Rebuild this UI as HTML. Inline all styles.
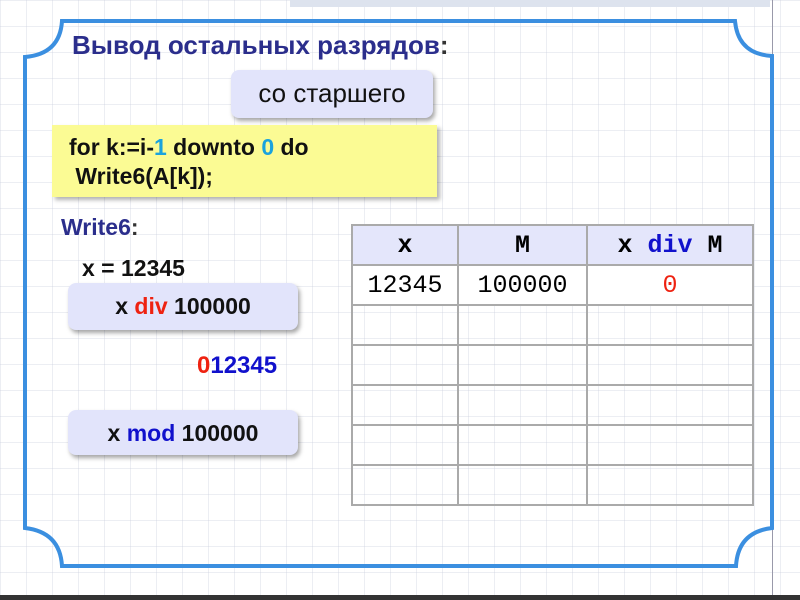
<!DOCTYPE html>
<html><head><meta charset="utf-8"><style>
body{margin:0;width:800px;height:600px;position:relative;overflow:hidden;font-family:"Liberation Sans",sans-serif;
background-color:#fff;
background-image:linear-gradient(90deg,rgba(200,205,220,.35) 1px,transparent 1px),linear-gradient(rgba(200,205,220,.35) 1px,transparent 1px);
background-size:26px 26px;}
.a{position:absolute;white-space:nowrap}
.bub{position:absolute;background:#e2e4fb;border-radius:8px;box-shadow:2px 3px 4px rgba(0,0,0,.35);font-weight:bold;font-size:23px;text-align:center}
table{border-collapse:collapse;position:absolute;left:351px;top:224px;font-family:"Liberation Mono",monospace;font-size:25px}
td{border:2px solid #aaa;height:38px;text-align:center;padding:0}
</style></head><body>
<div class="a" style="left:290px;top:0;width:480px;height:7px;background:#dde3ee"></div>
<div class="a" style="left:772px;top:0;width:1px;height:600px;background:#99a"></div>
<svg class="a" style="left:0;top:0" width="800" height="600">
<path d="M62 21 H735 Q738 54 772 56 V528 Q738 532 736 566 H62 Q60 532 25 528 V57 Q60 54 62 21 Z" fill="none" stroke="#3b8fe0" stroke-width="4"/>
</svg>
<div class="a" style="left:72px;top:30px;font-size:26px;font-weight:bold;color:#2b2e8c">Вывод остальных разрядов<span style="color:#333">:</span></div>
<div class="bub" style="left:231px;top:70px;width:202px;height:48px;line-height:46px;font-weight:normal;font-size:26px;color:#111">со старшего</div>
<div class="a" style="left:52px;top:125px;width:385px;height:72px;background:#fbfb94;box-shadow:3px 3px 4px rgba(0,0,0,.3);font-weight:bold;font-size:23px;line-height:29px;padding:8px 0 0 17px;box-sizing:border-box;color:#111">for k:=i-<span style="color:#1aa3dd">1</span> downto <span style="color:#1aa3dd">0</span> do<br>&nbsp;Write6(A[k]);</div>
<div class="a" style="left:61px;top:214px;font-size:23px;font-weight:bold;color:#2b2e8c">Write6<span style="color:#333">:</span></div>
<div class="a" style="left:82px;top:255px;font-size:23px;font-weight:bold;color:#111">x = 12345</div>
<div class="bub" style="left:68px;top:283px;width:230px;height:47px;line-height:46px;color:#111">x <span style="color:#e21">div</span> 100000</div>
<div class="a" style="left:197px;top:352px;font-size:24px;font-weight:bold;color:#11c"><span style="color:#e21">0</span>12345</div>
<div class="bub" style="left:68px;top:410px;width:230px;height:45px;line-height:46px;color:#111">x <span style="color:#11c">mod</span> 100000</div>
<table>
<tr style="background:#e4e6fb;font-weight:bold"><td style="width:104px">x</td><td style="width:127px">M</td><td style="width:164px">x <span style="color:#11c">div</span> M</td></tr>
<tr style="background:#fff"><td>12345</td><td>100000</td><td style="color:#e21">0</td></tr>
<tr><td></td><td></td><td></td></tr><tr><td></td><td></td><td></td></tr>
<tr><td></td><td></td><td></td></tr><tr><td></td><td></td><td></td></tr>
<tr><td></td><td></td><td></td></tr>
</table>
<div class="a" style="left:0;top:595px;width:800px;height:5px;background:#333"></div>
</body></html>
